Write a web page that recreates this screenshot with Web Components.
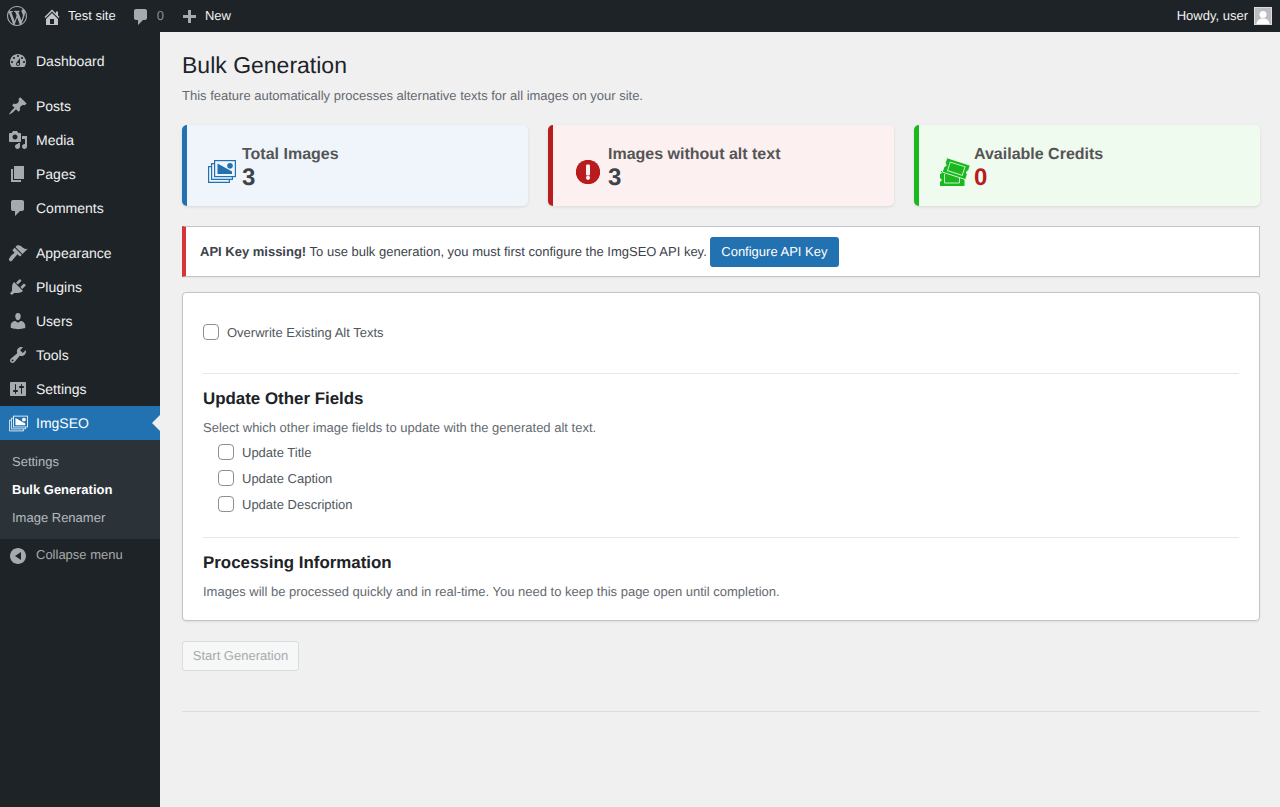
<!DOCTYPE html>
<html lang="en">
<head>
<meta charset="utf-8">
<title>Bulk Generation</title>
<style>
  html, body { margin: 0; height: 100%; }
  body {
    background: #f0f0f1;
    color: #3c434a;
    font: 13px/1.4 "Liberation Sans", Arial, sans-serif;
    text-rendering: geometricPrecision;
    overflow: hidden;
  }
</style>
</head>
<body>
<wp-admin-shell>
  <wp-admin-bar slot="bar"></wp-admin-bar>
  <wp-side-menu slot="menu"></wp-side-menu>
  <bulk-page></bulk-page>
</wp-admin-shell>

<script>
// Dashicons, all on a 20x20 box. The plugin's own icons are below.
const ICONS = {
  wordpress: 'M20 10c0-5.51-4.49-10-10-10C4.480 0 0 4.490 0 10c0 5.520 4.480 10 10 10 5.510 0 10-4.480 10-10zM7.780 15.370L4.370 6.220c.55-.02 1.170-.08 1.170-.08.5-.06.44-1.130-.06-1.110 0 0-1.450.11-2.370.11-.18 0-.37 0-.58-.01C4.120 2.690 6.870 1.110 10 1.110c2.330 0 4.450.87 6.050 2.340-.68-.11-1.650.39-1.650 1.580 0 .74.45 1.360.9 2.100.35.61.55 1.360.55 2.460 0 1.490-1.400 5-1.400 5l-3.030-8.370c.54-.02.82-.17.82-.17.5-.05.44-1.250-.06-1.220 0 0-1.440.12-2.380.12-.87 0-2.330-.12-2.330-.12-.5-.03-.56 1.200-.06 1.220l.92.08 1.260 3.410zM17.410 10c.24-.64.74-1.870.43-4.250.7 1.290 1.050 2.710 1.050 4.250 0 3.290-1.730 6.240-4.400 7.780.97-2.590 1.940-5.200 2.920-7.780zM6.100 18.090C3.120 16.650 1.110 13.530 1.110 10c0-1.300.23-2.480.72-3.590C3.250 10.300 4.670 14.200 6.100 18.090zm4.030-6.630l2.580 6.980c-.86.29-1.760.45-2.710.45-.79 0-1.570-.11-2.290-.33.81-2.380 1.620-4.740 2.420-7.100z',
  home: 'M16 8.500l1.530 1.530-1.060 1.060L10 4.620l-6.470 6.470-1.060-1.060L10 2.500l4 4v-2h2v4zm-6-2.460l6 5.990V18H4v-5.970zM12 17v-5H8v5h4z',
  comment: 'M5 2h9c1.100 0 2 .9 2 2v7c0 1.100-.9 2-2 2h-2l-5 5v-5H5c-1.100 0-2-.9-2-2V4c0-1.100.9-2 2-2z',
  plus: 'M17 9v3h-5v5H9v-5H4V9h5V4h3v5h5z',
  dashboard: 'M3.760 16h12.480c1.100-1.370 1.760-3.110 1.760-5 0-4.420-3.580-8-8-8s-8 3.580-8 8c0 1.890.66 3.630 1.760 5zM10 4c.55 0 1 .45 1 1s-.45 1-1 1-1-.45-1-1 .45-1 1-1zM6 6c.55 0 1 .45 1 1s-.45 1-1 1-1-.45-1-1 .45-1 1-1zm8 0c.55 0 1 .45 1 1s-.45 1-1 1-1-.45-1-1 .45-1 1-1zm-5.370 5.550L12 7v6c0 1.100-.9 2-2 2s-2-.9-2-2c0-.57.24-1.080.63-1.450zM4 10c.55 0 1 .45 1 1s-.45 1-1 1-1-.45-1-1 .45-1 1-1zm12 0c.55 0 1 .45 1 1s-.45 1-1 1-1-.45-1-1 .45-1 1-1zm-5 3c0-.55-.45-1-1-1s-1 .45-1 1 .45 1 1 1 1-.45 1-1z',
  pin: 'M10.440 3.020l1.820-1.820 6.360 6.350-1.830 1.820c-1.050-.68-2.480-.57-3.410.36l-.75.75c-.92.93-1.040 2.350-.35 3.410l-1.830 1.820-2.410-2.410-2.800 2.790c-.42.42-3.380 2.710-3.800 2.290s1.860-3.390 2.280-3.810l2.790-2.790L4.100 9.360l1.830-1.820c1.050.69 2.480.57 3.400-.36l.75-.75c.93-.92 1.050-2.350.36-3.410z',
  media: 'M13 11V4c0-.55-.45-1-1-1h-1.670L9 1H5L3.670 3H2c-.55 0-1 .45-1 1v7c0 .55.45 1 1 1h10c.55 0 1-.45 1-1zM7 4.500c1.380 0 2.500 1.120 2.500 2.500S8.380 9.500 7 9.500 4.500 8.380 4.500 7 5.620 4.500 7 4.500zM14 6h5v10.500c0 1.380-1.120 2.500-2.500 2.500S14 17.880 14 16.500s1.120-2.500 2.500-2.500c.17 0 .34.02.5.05V9h-3V6zm-4 8.050V13h2v3.500c0 1.380-1.120 2.500-2.500 2.500S7 17.880 7 16.500 8.120 14 9.500 14c.17 0 .34.02.5.05z',
  page: 'M6 15V2h10v13H6zm-1 1h8v2H3V5h2v11z',
  appearance: 'M14.480 11.060L7.410 3.990l1.500-1.500c.5-.56 2.300-.47 3.510.32 1.210.8 1.430 1.280 2.910 2.100 1.180.64 2.450 1.260 4.450.85zm-.71.71L6.700 4.700 4.930 6.470c-.39.39-.39 1.020 0 1.410l1.060 1.060c.39.39.39 1.030 0 1.420-.6.6-1.430 1.110-2.210 1.690-.35.26-.7.53-1.010.84L1.200 15.500c-.5.5-.5 1.300 0 1.800l.7.7c.5.5 1.300.5 1.800 0l2.600-2.900c.3-.3.6-.66.84-1.010.58-.78 1.090-1.610 1.690-2.210.39-.39 1.030-.39 1.420 0l1.060 1.060c.39.39 1.020.39 1.410 0z',
  plugins: 'M13.110 4.360L9.870 7.600 8 5.730l3.240-3.240c.35-.34 1.050-.2 1.560.32.52.51.66 1.210.31 1.550zm-8 1.770l.91-1.120 9.010 9.010-1.190.84c-.71.71-2.630 1.160-3.820 1.160H6.140L4.900 17.260c-.59.59-1.540.59-2.120 0-.59-.58-.59-1.530 0-2.120l1.240-1.240v-3.880c0-1.130.4-3.190 1.090-3.890zm7.260 3.970l3.240-3.240c.34-.35 1.040-.21 1.550.31.52.51.66 1.210.31 1.550l-3.240 3.250z',
  users: 'M10 9.250c-2.270 0-2.730-3.440-2.730-3.440C7 4.020 7.820 2 9.970 2c2.160 0 2.980 2.020 2.710 3.810 0 0-.41 3.440-2.680 3.440zm0 2.570L12.720 10c2.390 0 4.520 2.330 4.520 4.530v2.490s-3.650 1.130-7.240 1.130c-3.650 0-7.240-1.130-7.240-1.130v-2.490c0-2.250 1.940-4.480 4.470-4.480z',
  tools: 'M16.680 9.770c-1.340 1.340-3.300 1.670-4.950.99l-5.410 6.520c-.99.99-2.590.99-3.580 0s-.99-2.590 0-3.570l6.520-5.420c-.68-1.650-.35-3.610.99-4.950 1.280-1.280 3.120-1.620 4.720-1.060l-2.890 2.890 2.820 2.820 2.860-2.870c.53 1.580.18 3.390-1.080 4.650zM3.810 16.210c.4.39 1.040.39 1.430 0 .4-.4.4-1.040 0-1.430-.39-.4-1.030-.4-1.430 0-.39.39-.39 1.030 0 1.430z',
  settings: 'M18 16V4c0-.55-.45-1-1-1H3c-.55 0-1 .45-1 1v12c0 .55.45 1 1 1h14c.55 0 1-.45 1-1zM8 11h1c.55 0 1 .45 1 1s-.45 1-1 1H8v1.500c0 .28-.22.5-.5.5s-.5-.22-.5-.5V13H6c-.55 0-1-.45-1-1s.45-1 1-1h1V5.500c0-.28.22-.5.5-.5s.5.22.5.5V11zm5-2h-1c-.55 0-1-.45-1-1s.45-1 1-1h1V5.500c0-.28.22-.5.5-.5s.5.22.5.5V7h1c.55 0 1 .45 1 1s-.45 1-1 1h-1v5.500c0 .28-.22.5-.5.5s-.5-.22-.5-.5V9z',
  collapse: 'M18 10c0-4.420-3.580-8-8-8s-8 3.580-8 8 3.580 8 8 8 8-3.580 8-8zm-5 4l-6-4 6-4v8z'
}

/**
 * Returns the markup of a 20x20 dashicon.
 *
 * @param {string} name - Key in ICONS.
 * @returns {string} - The svg element as text.
 */
const dashicon = (name) => `<svg viewBox="0 0 20 20" width="20" height="20" fill="currentColor" aria-hidden="true"><path d="${ICONS[name]}"/></svg>`

// The stacked pictures used by the ImgSEO menu item and the first card.
const imagesIcon = (width, height) => `<svg style="display:block" viewBox="0 0 28 23" width="${width}" height="${height}" aria-hidden="true">
  <g fill="none" stroke="currentColor" stroke-width="1.2">
    <path d="M3 6.600H.6V22.400H21.400V20"/>
    <path d="M6 3.600H3.600V19.400H24.400V17"/>
    <rect x="6.600" y=".6" width="20.800" height="16"/>
  </g>
  <path fill="currentColor" d="M9.500 3.500 24 11.500V14H9.500z"/>
  <circle fill="currentColor" cx="22" cy="5.700" r="2.800"/>
</svg>`

const alertIcon = `<svg style="display:block" viewBox="0 0 24 24" width="24" height="24" aria-hidden="true">
  <circle cx="12" cy="12" r="12.200" fill="currentColor"/>
  <rect x="10" y="4.500" width="4" height="11" rx="1" fill="#fcf0f0"/>
  <circle cx="12" cy="17.800" r="2.100" fill="#fcf0f0"/>
</svg>`

const ticketsIcon = `<svg style="display:block" viewBox="0 0 31 29" width="31" height="29" aria-hidden="true">
  <path fill="currentColor" d="M1.500 14H25.500V29H1V25L3 23 1 21V17L3 16z"/>
  <path fill="none" stroke="#c4efc6" stroke-width="1" d="M5.500 17V26H20.500V21"/>
  <g transform="rotate(18 17.300 11.700)">
    <path fill="currentColor" stroke="#f0fbf0" stroke-width=".8" d="M5 4.200H29.500V9.500L27.800 11.700 29.500 13.900V19.200H5V13.900L6.700 11.700 5 9.500z"/>
    <rect x="9.500" y="7.200" width="15.500" height="9" fill="none" stroke="#c4efc6" stroke-width="1"/>
  </g>
</svg>`

/**
 * Page frame: bar on top, menu on the left, content in the remaining space.
 */
customElements.define('wp-admin-shell', class extends HTMLElement {
  constructor () {
    super()
    this.attachShadow({ mode: 'open' }).innerHTML = `
      <style>
        :host {
          display: grid;
          grid-template: 32px 1fr / 160px 1fr;
          height: 807px;
        }
        .bar { grid-column: 1 / 3; }
      </style>
      <div class="bar"><slot name="bar"></slot></div>
      <slot name="menu"></slot>
      <slot></slot>
    `
  }
})

customElements.define('wp-admin-bar', class extends HTMLElement {
  constructor () {
    super()
    this.attachShadow({ mode: 'open' }).innerHTML = `
      <style>
        :host {
          display: flex;
          align-items: center;
          height: 32px;
          background: #1d2327;
          color: #f0f0f1;
          font-size: 13px;
          line-height: 32px;
        }
        svg { display: block; }
        .icon { display: flex; align-items: center; color: #a7aaad; }
        .logo { margin-left: 7px; }
        .home { margin-left: 15px; padding-top: 2px; color: #c3c4c7; }
        .site { margin-left: 6px; }
        .comment { margin-left: 15px; padding-top: 2px; }
        .count { margin-left: 6px; color: #8c8f94; }
        .plus { margin-left: 15px; }
        .new { margin-left: 6px; }
        .spacer { flex: 1; }
        .avatar {
          box-sizing: border-box;
          width: 18px;
          height: 18px;
          margin: 0 8px 0 6px;
          background: #bcbdc0;
          border: 1px solid #dcdcde;
          overflow: hidden;
        }
      </style>
      <div class="icon logo">${dashicon('wordpress')}</div>
      <div class="icon home">${dashicon('home')}</div>
      <span class="site">Test site</span>
      <div class="icon comment">${dashicon('comment')}</div>
      <span class="count">0</span>
      <div class="icon plus">${dashicon('plus')}</div>
      <span class="new">New</span>
      <div class="spacer"></div>
      <span>Howdy, user</span>
      <div class="avatar">
        <svg viewBox="0 0 16 16" width="16" height="16" aria-hidden="true">
          <circle cx="8" cy="6.500" r="3.500" fill="#fff"/>
          <path d="M1.500 16c0-3.500 3-5.500 6.500-5.500s6.500 2 6.500 5.500z" fill="#fff"/>
        </svg>
      </div>
    `
  }
})

customElements.define('wp-menu-item', class extends HTMLElement {
  constructor () {
    super()
    this.attachShadow({ mode: 'open' })
  }

  connectedCallback () {
    const active = this.hasAttribute('active')
    const iconName = this.getAttribute('icon')
    this.shadowRoot.innerHTML = `
      <style>
        :host {
          display: flex;
          align-items: center;
          position: relative;
          height: 34px;
          font-size: 14px;
          color: ${active ? '#fff' : '#f0f0f1'};
          background: ${active ? '#2271b1' : 'transparent'};
        }
        .icon {
          display: flex;
          justify-content: center;
          width: 36px;
          color: ${active ? '#fff' : '#a7aaad'};
        }
        .icon svg { display: block; }
        .label { margin-top: 2px; }
        .arrow {
          position: absolute;
          right: 0;
          top: 9px;
          border: 8px solid transparent;
          border-left-width: 0;
          border-right-color: #f0f0f1;
          display: ${active ? 'block' : 'none'};
        }
      </style>
      <span class="icon">${iconName === 'images' ? imagesIcon(19, 17) : dashicon(iconName)}</span>
      <span class="label"><slot></slot></span>
      <span class="arrow"></span>
    `
  }
})

customElements.define('wp-side-menu', class extends HTMLElement {
  constructor () {
    super()
    this.attachShadow({ mode: 'open' }).innerHTML = `
      <style>
        :host {
          display: flex;
          flex-direction: column;
          background: #1d2327;
          padding-top: 12px;
        }
        .sep { height: 11px; }
        .sub {
          display: flex;
          flex-direction: column;
          padding: 8px 0 7px;
          background: #2c3338;
          font-size: 13px;
          color: rgba(240, 246, 252, .7);
        }
        .sub a {
          padding: 0 12px;
          line-height: 28px;
          height: 28px;
        }
        .sub .current { color: #fff; font-weight: 600; }
        .collapse {
          display: flex;
          height: 34px;
          font-size: 13px;
          color: #a7aaad;
          line-height: 31px;
        }
        .collapse .icon {
          display: flex;
          justify-content: center;
          width: 36px;
          padding-top: 7px;
        }
        svg { display: block; }
      </style>
      <wp-menu-item icon="dashboard">Dashboard</wp-menu-item>
      <div class="sep"></div>
      <wp-menu-item icon="pin">Posts</wp-menu-item>
      <wp-menu-item icon="media">Media</wp-menu-item>
      <wp-menu-item icon="page">Pages</wp-menu-item>
      <wp-menu-item icon="comment">Comments</wp-menu-item>
      <div class="sep"></div>
      <wp-menu-item icon="appearance">Appearance</wp-menu-item>
      <wp-menu-item icon="plugins">Plugins</wp-menu-item>
      <wp-menu-item icon="users">Users</wp-menu-item>
      <wp-menu-item icon="tools">Tools</wp-menu-item>
      <wp-menu-item icon="settings">Settings</wp-menu-item>
      <wp-menu-item icon="images" active>ImgSEO</wp-menu-item>
      <div class="sub">
        <a>Settings</a>
        <a class="current">Bulk Generation</a>
        <a>Image Renamer</a>
      </div>
      <div class="collapse">
        <span class="icon">${dashicon('collapse')}</span>
        <span>Collapse menu</span>
      </div>
    `
  }
})

customElements.define('stat-card', class extends HTMLElement {
  constructor () {
    super()
    this.attachShadow({ mode: 'open' }).innerHTML = `
      <style>
        :host {
          display: flex;
          align-items: center;
          box-sizing: border-box;
          height: 81px;
          padding: 21px 20px 14px;
          border-radius: 5px;
          border-left: 5px solid var(--accent);
          background: var(--tint);
          box-shadow: 0 1px 3px rgba(0, 0, 0, .1);
        }
        .icon {
          display: flex;
          justify-content: center;
          width: 30px;
          margin: 5px 5px 0 0;
          color: var(--accent);
        }
        ::slotted([slot="icon"]) { display: block; }
        .label {
          font-size: 16px;
          line-height: 18px;
          font-weight: 700;
          color: #555;
        }
        .value {
          font-size: 24px;
          line-height: 28px;
          font-weight: 700;
          color: var(--value, #3c434a);
        }
      </style>
      <div class="icon"><slot name="icon"></slot></div>
      <div>
        <div class="label">${this.getAttribute('label')}</div>
        <div class="value"><slot></slot></div>
      </div>
    `
  }
})

customElements.define('api-notice', class extends HTMLElement {
  constructor () {
    super()
    this.attachShadow({ mode: 'open' }).innerHTML = `
      <style>
        :host {
          display: flex;
          align-items: center;
          box-sizing: border-box;
          height: 51px;
          padding: 0 12px 0 14px;
          background: #fff;
          border: 1px solid #c3c4c7;
          border-left: 4px solid #d63638;
          box-shadow: 0 1px 1px rgba(0, 0, 0, .04);
          white-space: pre;
        }
        span { margin-top: 2px; }
        a {
          display: block;
          margin-left: 3px;
          padding: 0 11.500px;
          line-height: 30px;
          border-radius: 3px;
          background: #2271b1;
          color: #fff;
        }
      </style>
      <span><b>API Key missing!</b> To use bulk generation, you must first configure the ImgSEO API key.</span>
      <a>Configure API Key</a>
    `
  }
})

customElements.define('check-row', class extends HTMLElement {
  constructor () {
    super()
    this.attachShadow({ mode: 'open' }).innerHTML = `
      <style>
        :host {
          display: flex;
          align-items: center;
          gap: 8px;
          height: 26px;
          color: #50575e;
        }
        i {
          box-sizing: border-box;
          flex: none;
          width: 16px;
          height: 16px;
          background: #fff;
          border: 1px solid #8c8f94;
          border-radius: 4px;
        }
        span { margin-top: 2px; }
      </style>
      <i></i><span><slot></slot></span>
    `
  }
})

customElements.define('settings-panel', class extends HTMLElement {
  constructor () {
    super()
    this.attachShadow({ mode: 'open' }).innerHTML = `
      <style>
        :host {
          display: block;
          box-sizing: border-box;
          height: 329px;
          padding: 0 20px;
          background: #fff;
          border: 1px solid #c3c4c7;
          border-radius: 4px;
          box-shadow: 0 1px 2px rgba(0, 0, 0, .08);
        }
        .top { padding-top: 26px; }
        hr {
          height: 1px;
          margin: 28px 0 0;
          border: 0;
          background: #e8e8e9;
        }
        h3 {
          margin: 6px 0 0;
          font-size: 16.900px;
          line-height: 38px;
          font-weight: 700;
          color: #1d2327;
        }
        p {
          margin: 1px 0 0;
          line-height: 18px;
          color: #646970;
        }
        .fields { padding: 2px 0 0 15px; }
        .second { margin-top: 20px; }
      </style>
      <div class="top"><check-row>Overwrite Existing Alt Texts</check-row></div>
      <hr>
      <h3>Update Other Fields</h3>
      <p>Select which other image fields to update with the generated alt text.</p>
      <div class="fields">
        <check-row>Update Title</check-row>
        <check-row>Update Caption</check-row>
        <check-row>Update Description</check-row>
      </div>
      <hr class="second">
      <h3>Processing Information</h3>
      <p>Images will be processed quickly and in real-time. You need to keep this page open until completion.</p>
    `
  }
})

customElements.define('bulk-page', class extends HTMLElement {
  constructor () {
    super()
    this.attachShadow({ mode: 'open' }).innerHTML = `
      <style>
        :host {
          display: block;
          padding: 0 20px 0 22px;
        }
        h1 {
          margin: 0;
          padding-top: 17px;
          font-size: 23px;
          line-height: 32px;
          font-weight: 400;
          color: #1d2327;
        }
        .lead {
          margin: 6px 0 0;
          line-height: 18px;
          color: #646970;
        }
        .cards {
          display: grid;
          grid-template-columns: repeat(3, 1fr);
          gap: 20px;
          margin-top: 20px;
        }
        api-notice { margin-top: 20px; }
        settings-panel { margin-top: 15px; }
        .start {
          box-sizing: border-box;
          width: 117px;
          height: 30px;
          margin-top: 20px;
          text-align: center;
          line-height: 28px;
          color: #a7aaad;
          background: #f6f7f7;
          border: 1px solid #dcdcde;
          border-radius: 3px;
        }
        .rule {
          height: 1px;
          margin-top: 40px;
          background: #dcdcde;
        }
        .blue { --accent: #2271b1; --tint: #f0f5fc; }
        .red { --accent: #b91c1c; --tint: #fcf0f0; }
        .green { --accent: #1bb71f; --tint: #f0fbf0; --value: #b91c1c; }
      </style>
      <h1>Bulk Generation</h1>
      <p class="lead">This feature automatically processes alternative texts for all images on your site.</p>
      <div class="cards">
        <stat-card class="blue" label="Total Images"><span slot="icon">${imagesIcon(28, 23)}</span>3</stat-card>
        <stat-card class="red" label="Images without alt text"><span slot="icon">${alertIcon}</span>3</stat-card>
        <stat-card class="green" label="Available Credits"><span slot="icon">${ticketsIcon}</span>0</stat-card>
      </div>
      <api-notice></api-notice>
      <settings-panel></settings-panel>
      <div class="start">Start Generation</div>
      <div class="rule"></div>
    `
  }
})
</script>
</body>
</html>
